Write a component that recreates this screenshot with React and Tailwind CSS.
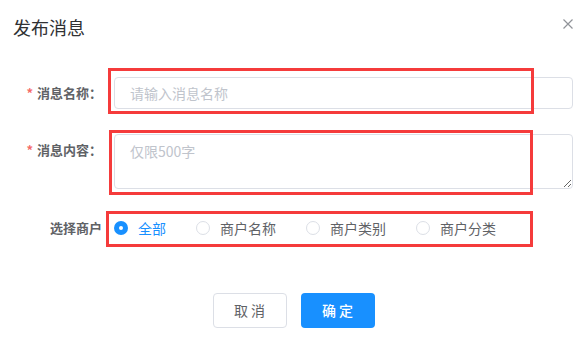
const font = { fontFamily: '"Noto Sans CJK SC", "Noto Sans", sans-serif' };

const Label = ({ required, children }) => (
  <div className="w-[114px] shrink-0 pr-[12px] text-right text-[13px] font-bold leading-[32px] text-[#606266]">
    {required && <span className="mr-[4px] text-[#f56c6c]">*</span>}
    {children}
  </div>
);

const Radio = ({ checked, label }) => (
  <label className="mr-[30px] flex items-center">
    {checked ? (
      <span className="flex h-[14px] w-[14px] items-center justify-center rounded-full bg-[#1890ff]">
        <span className="h-[4px] w-[4px] rounded-full bg-white"></span>
      </span>
    ) : (
      <span className="h-[14px] w-[14px] rounded-full border border-[#dcdfe6] bg-white"></span>
    )}
    <span
      className={`pl-[10px] text-[14px] leading-[20px] ${
        checked ? "text-[#1890ff]" : "text-[#606266]"
      }`}
    >
      {label}
    </span>
  </label>
);

export default function App() {
  return (
    <div className="relative h-[344px] w-[582px] bg-white" style={font}>
      <div className="flex items-center justify-between pl-[13px] pr-[9px] pt-[15px]">
        <h2 className="text-[18px] font-normal leading-[24px] text-[#303133]">发布消息</h2>
        <svg width="10" height="10" viewBox="0 0 10 10" className="-mt-[6px]">
          <path d="M0.5 0.5 L9.5 9.5 M9.5 0.5 L0.5 9.5" stroke="#909399" strokeWidth="1.2" />
        </svg>
      </div>

      <form className="pt-[38px]">
        <div className="mb-[25px] flex">
          <Label required>消息名称：</Label>
          <input
            type="text"
            placeholder="请输入消息名称"
            className="h-[32px] w-[459px] rounded-[4px] border border-[#dcdfe6] px-[15px] text-[14px] text-[#606266] outline-none placeholder:text-[#c0c4cc]"
          />
        </div>

        <div className="mb-[23px] flex">
          <Label required>消息内容：</Label>
          <textarea
            placeholder="仅限500字"
            className="h-[55px] w-[459px] rounded-[4px] border border-[#dcdfe6] px-[15px] py-[5px] text-[14px] leading-[22px] text-[#606266] outline-none placeholder:text-[#c0c4cc]"
          ></textarea>
        </div>

        <div className="flex">
          <Label>选择商户</Label>
          <div className="flex h-[32px] items-center">
            <Radio checked label="全部" />
            <Radio label="商户名称" />
            <Radio label="商户类别" />
            <Radio label="商户分类" />
          </div>
        </div>

        <div className="flex justify-center gap-[14px] pl-[5px] pt-[49px]">
          <button
            type="button"
            className="h-[35px] w-[74px] rounded-[4px] border border-[#dcdfe6] bg-white text-[14px] text-[#606266]"
          >
            取 消
          </button>
          <button
            type="button"
            className="h-[35px] w-[74px] rounded-[4px] bg-[#1890ff] text-[14px] font-medium text-white"
          >
            确 定
          </button>
        </div>
      </form>

      {/* annotation boxes */}
      <div className="pointer-events-none absolute left-[108px] top-[68px] h-[46px] w-[426px] border-[3px] border-[#f53b3b]"></div>
      <div className="pointer-events-none absolute left-[109px] top-[130px] h-[65px] w-[424px] border-[3px] border-[#f53b3b]"></div>
      <div className="pointer-events-none absolute left-[106px] top-[211px] h-[36px] w-[427px] border-[3px] border-[#f53b3b]"></div>
    </div>
  );
}
